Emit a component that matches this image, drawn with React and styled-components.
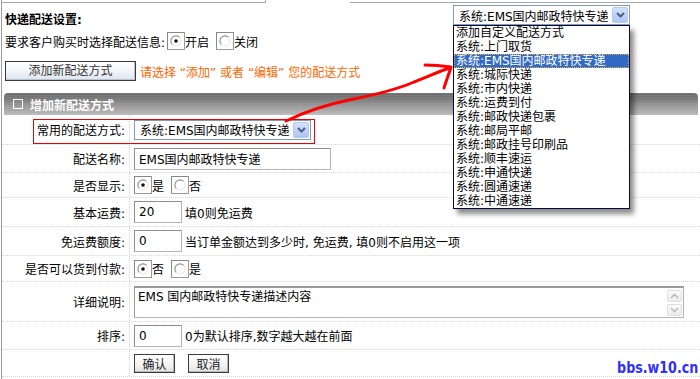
import React from 'react';
import styled, { createGlobalStyle } from 'styled-components';

const GlobalStyle = createGlobalStyle`
  html, body {
    margin: 0;
    padding: 0;
    background: #fff;
  }
  body {
    font-family: "DejaVu Sans", "Noto Sans CJK SC", sans-serif;
    font-size: 12px;
    color: #000;
  }
`;

const methods = [
  '添加自定义配送方式',
  '系统:上门取货',
  '系统:EMS国内邮政特快专递',
  '系统:城际快递',
  '系统:市内快递',
  '系统:运费到付',
  '系统:邮政快递包裹',
  '系统:邮局平邮',
  '系统:邮政挂号印刷品',
  '系统:顺丰速运',
  '系统:申通快递',
  '系统:圆通速递',
  '系统:中通速递',
];

const Frame = styled.div`
  position: relative;
  width: 699px;
  height: 379px;
  margin-left: 1px;
  border-left: 1px solid #9c9c9c;
  box-sizing: border-box;
  overflow: hidden;
`;

const TopRule = styled.div`
  display: flex;
  height: 3px;
`;

const RuleSegment = styled.div`
  width: ${(p) => p.w}px;
  margin-left: ${(p) => p.gap || 0}px;
  border-bottom: 1px solid #a8a8a8;
  border-right: ${(p) => (p.tick ? '1px solid #a8a8a8' : 'none')};
  box-sizing: border-box;
`;

const Settings = styled.div`
  display: flex;
  flex-direction: column;
  padding: 8px 0 0 3px;
`;

const SettingsTitle = styled.div`
  font-weight: bold;
  line-height: 18px;
`;

const OptionLine = styled.div`
  display: flex;
  align-items: center;
  height: 22px;
  margin-top: 1px;
`;

const ActionLine = styled.div`
  display: flex;
  align-items: flex-end;
  gap: 4px;
  margin-top: 9px;
`;

const AddButton = styled.div`
  width: 131px;
  height: 20px;
  box-sizing: border-box;
  border: 1px solid #3a3a3a;
  background: linear-gradient(to bottom, #ffffff 0%, #f4f6fa 45%, #dde4ee 100%);
  box-shadow: inset -1px -1px 0 #b9c2cf;
  color: #333;
  display: flex;
  align-items: center;
  justify-content: center;
  line-height: 18px;
`;

const Tip = styled.span`
  color: #ff6600;
  line-height: 16px;
`;

const RadioWrap = styled.span`
  display: inline-flex;
  align-items: center;
  margin-left: ${(p) => p.lead}px;
`;

const RadioBox = styled.span`
  display: inline-flex;
  align-items: flex-start;
  justify-content: flex-start;
  width: 18px;
  height: 18px;
  box-sizing: border-box;
  padding: 2px 0 0 2px;
  border: 1px solid #9a9a9a;
  border-top-color: #888;
  border-left-color: #888;
  background: #fff;
`;

const Radio = ({ checked, label, lead = 2 }) => (
  <RadioWrap lead={lead}>
    <RadioBox>
      <svg width="12" height="12" viewBox="0 0 12 12">
        <path d="M9.6 2.4 A5 5 0 0 0 2.4 9.6" fill="none" stroke="#8c8c8c" strokeWidth="1.1" />
        <path d="M2.4 9.6 A5 5 0 0 0 9.6 2.4" fill="none" stroke="#e6e6e6" strokeWidth="1" />
        {checked && <circle cx="6" cy="6" r="1.8" fill="#111" />}
      </svg>
    </RadioBox>
    {label}
  </RadioWrap>
);

const Panel = styled.div`
  margin-top: 12px;
`;

const PanelHeader = styled.div`
  display: flex;
  align-items: center;
  gap: 7px;
  height: 22px;
  margin: 0 2px 0 2px;
  padding-left: 9px;
  border-radius: 4px 4px 0 0;
  background:
    repeating-linear-gradient(to bottom, rgba(255, 255, 255, 0.07) 0 1px, transparent 1px 2px),
    linear-gradient(to bottom, #6a6a6a 0%, #7a7a7a 30%, #959595 55%, #a7a7a7 80%, #bcbcbc 100%);
  color: #fff;
  font-weight: bold;
`;

const HeaderBox = styled.span`
  width: 8px;
  height: 8px;
  border: 1px solid #fff;
`;

const Row = styled.div`
  display: grid;
  grid-template-columns: 128px 1fr;
  height: ${(p) => p.h}px;
  box-sizing: border-box;
  border-bottom: 1px dotted #d8d8d8;
`;

const Label = styled.div`
  display: flex;
  align-items: center;
  justify-content: flex-end;
  padding-right: 4px;
  border-right: 1px dotted #d8d8d8;
`;

const Cell = styled.div`
  display: flex;
  align-items: center;
  padding-left: 4px;
  padding-top: ${(p) => p.shift || 0}px;
`;

const FormRow = ({ h, label, shift, children }) => (
  <Row h={h}>
    <Label>{label}</Label>
    <Cell shift={shift}>{children}</Cell>
  </Row>
);

const SelectBox = styled.div`
  display: flex;
  align-items: center;
  justify-content: space-between;
  width: ${(p) => p.w}px;
  height: 20px;
  box-sizing: border-box;
  padding: 0 1px 0 5px;
  border: 1px solid #7f9db9;
  background: #fff;
`;

const ArrowBtn = styled.span`
  display: flex;
  align-items: center;
  justify-content: center;
  width: 16px;
  height: 16px;
  box-sizing: border-box;
  border: 1px solid #b6c8f0;
  border-radius: 2px;
  background: linear-gradient(to bottom, #d6e2fc 0%, #c0d2f8 50%, #b2c6f3 100%);
`;

const ChevronDown = () => (
  <svg width="9" height="6" viewBox="0 0 9 6">
    <path d="M1 1 L4.5 4.5 L8 1" fill="none" stroke="#4d6185" strokeWidth="2" />
  </svg>
);

const Select = ({ w, value }) => (
  <SelectBox w={w}>
    <span>{value}</span>
    <ArrowBtn>
      <ChevronDown />
    </ArrowBtn>
  </SelectBox>
);

const TextInput = styled.input`
  width: ${(p) => p.w}px;
  height: 22px;
  box-sizing: border-box;
  margin: 0;
  padding: 0 4px;
  border: 1px solid #b4b4b4;
  border-top-color: #8e8e8e;
  border-left-color: #8e8e8e;
  font: inherit;
  color: #000;
  background: #fff;
  outline: none;
`;

const Hint = styled.span`
  margin-left: 3px;
`;

const NoteArea = styled.div`
  display: flex;
  justify-content: space-between;
  width: 550px;
  height: 32px;
  box-sizing: border-box;
  padding: 2px 1px 1px 3px;
  border: 1px solid #b4b4b4;
  border-top: 2px solid #9a9a9a;
  border-left-color: #9a9a9a;
  line-height: 14px;
`;

const ScrollTrack = styled.div`
  display: flex;
  flex-direction: column;
  gap: 2px;
`;

const ScrollBtn = styled.span`
  display: flex;
  align-items: center;
  justify-content: center;
  width: 15px;
  height: 13px;
  box-sizing: border-box;
  border: 1px solid #dedede;
  border-radius: 2px;
  background: linear-gradient(to bottom, #fbfbfb, #ececec);
`;

const Chevron = ({ up }) => (
  <svg width="9" height="6" viewBox="0 0 9 6">
    <path
      d={up ? 'M1 5 L4.5 1.5 L8 5' : 'M1 1 L4.5 4.5 L8 1'}
      fill="none"
      stroke="#bcbcbc"
      strokeWidth="1.6"
    />
  </svg>
);

const ButtonRow = styled.div`
  display: flex;
  gap: 13px;
`;

const SmallButton = styled.div`
  width: 41px;
  height: 19px;
  box-sizing: border-box;
  border: 1px solid #3c3c3c;
  background: linear-gradient(to bottom, #ffffff 0%, #f3f3f3 60%, #e2e2e2 100%);
  box-shadow: inset -1px -1px 0 #b8b8b8;
  display: flex;
  align-items: center;
  justify-content: center;
  color: #222;
`;

/* annotations lying over the page */

const Highlight = styled.div`
  position: absolute;
  left: 31px;
  top: 119px;
  width: 282px;
  height: 25px;
  box-sizing: border-box;
  border: 1px solid #ee0000;
`;

const Overlay = styled.svg`
  position: absolute;
  left: 0;
  top: 0;
  pointer-events: none;
`;

const Dropdown = styled.div`
  position: absolute;
  left: 451px;
  top: 5px;
  width: 177px;
  display: flex;
  flex-direction: column;
`;

const List = styled.ul`
  margin: 0;
  padding: 0;
  list-style: none;
  border: 1px solid #0a0a3a;
  background: #fff;
  box-shadow: 4px 5px 5px rgba(0, 0, 0, 0.45);
`;

const Item = styled.li`
  height: 14px;
  line-height: 14px;
  padding-left: 2px;
  white-space: nowrap;
  background: ${(p) => (p.active ? '#316ac5' : 'transparent')};
  color: ${(p) => (p.active ? '#fff' : '#000')};
  outline: ${(p) => (p.active ? '1px dotted #e8b040' : 'none')};
  outline-offset: -1px;
`;

const Watermark = styled.div`
  position: absolute;
  right: 2px;
  bottom: 3px;
  color: #2f2fff;
  font-family: "Liberation Sans Narrow", "DejaVu Sans Condensed", sans-serif;
  font-weight: bold;
  font-size: 16px;
  line-height: 16px;
  transform: scaleX(0.88);
  transform-origin: right center;
`;

export default function App() {
  return (
    <>
      <GlobalStyle />
      <Frame>
        <TopRule>
          <RuleSegment w={264} tick />
          <RuleSegment w={350} gap={84} />
        </TopRule>

        <Settings>
          <SettingsTitle>快递配送设置:</SettingsTitle>
          <OptionLine>
            要求客户购买时选择配送信息:
            <Radio checked label="开启" />
            <Radio label="关闭" lead={7} />
          </OptionLine>
          <ActionLine>
            <AddButton>添加新配送方式</AddButton>
            <Tip>请选择 “添加” 或者 “编辑” 您的配送方式</Tip>
          </ActionLine>
        </Settings>

        <Panel>
          <PanelHeader>
            <HeaderBox />
            增加新配送方式
          </PanelHeader>

          <FormRow h={30} label="常用的配送方式:">
            <Select w={177} value="系统:EMS国内邮政特快专递" />
          </FormRow>
          <FormRow h={28} label="配送名称:">
            <TextInput w={197} defaultValue="EMS国内邮政特快专递" readOnly />
          </FormRow>
          <FormRow h={25} label="是否显示:">
            <Radio checked label="是" lead={0} />
            <Radio label="否" lead={7} />
          </FormRow>
          <FormRow h={29} label="基本运费:">
            <TextInput w={48} defaultValue="20" readOnly />
            <Hint>填0则免运费</Hint>
          </FormRow>
          <FormRow h={29} label="免运费额度:">
            <TextInput w={48} defaultValue="0" readOnly />
            <Hint>当订单金额达到多少时, 免运费, 填0则不启用这一项</Hint>
          </FormRow>
          <FormRow h={26} label="是否可以货到付款:">
            <Radio checked label="否" lead={0} />
            <Radio label="是" lead={7} />
          </FormRow>
          <FormRow h={40} label="详细说明:">
            <NoteArea>
              <span>EMS 国内邮政特快专递描述内容</span>
              <ScrollTrack>
                <ScrollBtn>
                  <Chevron up />
                </ScrollBtn>
                <ScrollBtn>
                  <Chevron />
                </ScrollBtn>
              </ScrollTrack>
            </NoteArea>
          </FormRow>
          <FormRow h={28} label="排序:">
            <TextInput w={48} defaultValue="0" readOnly />
            <Hint>0为默认排序,数字越大越在前面</Hint>
          </FormRow>
          <FormRow h={27} label="">
            <ButtonRow>
              <SmallButton>确认</SmallButton>
              <SmallButton>取消</SmallButton>
            </ButtonRow>
          </FormRow>
        </Panel>

        <Highlight />

        <Overlay width="699" height="379" viewBox="-2 0 699 379">
          <path
            d="M282 121 C305 110 325 104 345 100 C370 95 392 90 410 82 C425 76 436 71 446 68"
            fill="none"
            stroke="#ff0000"
            strokeWidth="3"
            strokeLinecap="round"
          />
          <path
            d="M421 65 C432 65 440 66 447 67 C445 74 442 81 440 88"
            fill="none"
            stroke="#ff0000"
            strokeWidth="3"
            strokeLinecap="round"
            strokeLinejoin="round"
          />
        </Overlay>

        <Dropdown>
          <Select w={177} value="系统:EMS国内邮政特快专递" />
          <List>
            {methods.map((m, i) => (
              <Item key={m} active={i === 2}>
                {m}
              </Item>
            ))}
          </List>
        </Dropdown>

        <Watermark>bbs.w10.cn</Watermark>
      </Frame>
    </>
  );
}
